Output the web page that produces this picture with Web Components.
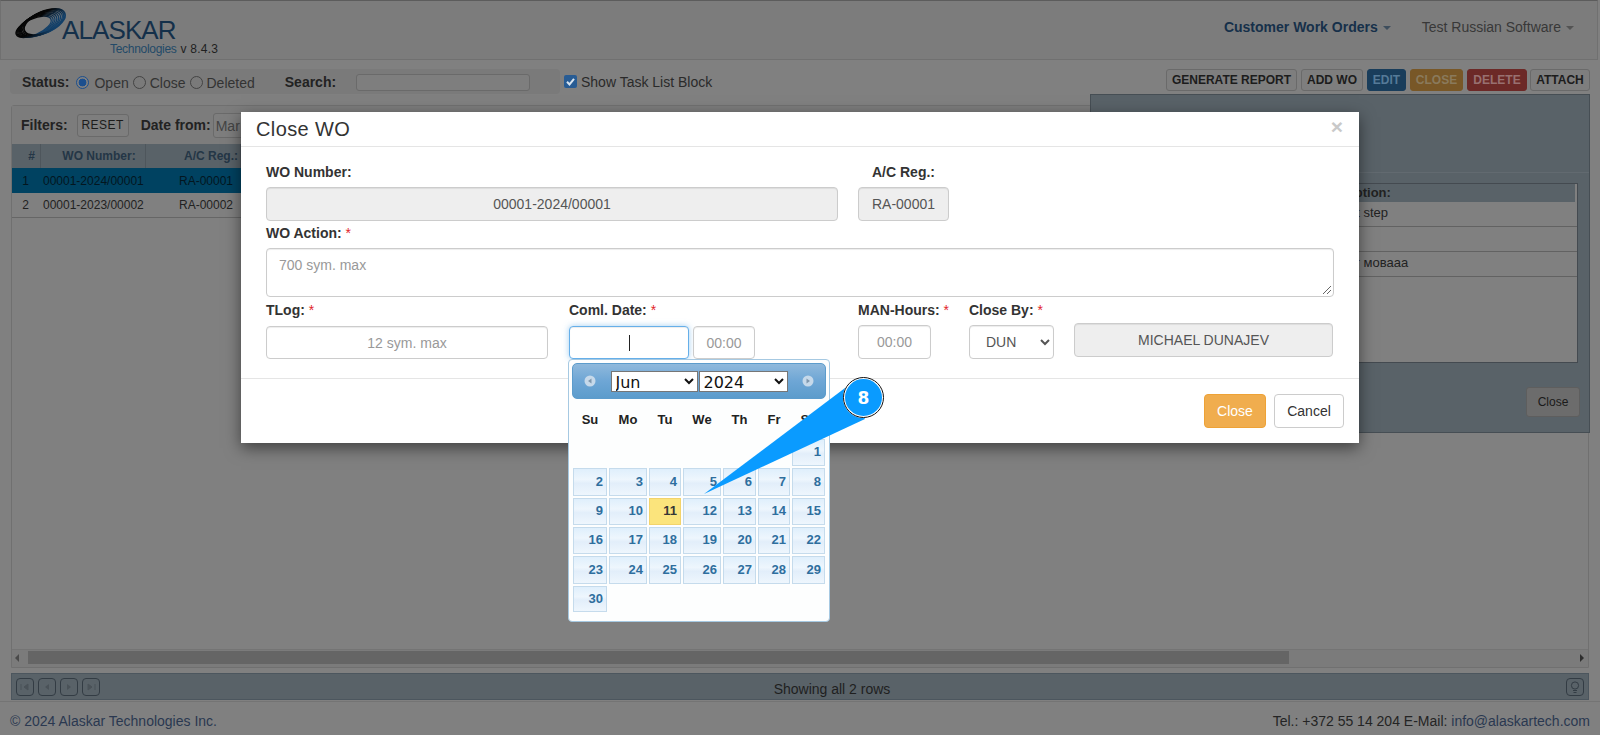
<!DOCTYPE html>
<html lang="en"><head><meta charset="utf-8"><title>Close WO</title>
<style>
html,body{margin:0;height:735px;overflow:hidden;background:#808080;font:14px "Liberation Sans",Arial,sans-serif;color:#1c1c1c}
#page{position:relative;width:1600px;height:735px;overflow:hidden}
</style></head><body>
<div id="page">
  <app-navbar></app-navbar>
  <app-toolbar></app-toolbar>
  <wo-grid></wo-grid>
  <wo-pager></wo-pager>
  <app-footer></app-footer>
  <wo-detail></wo-detail>
  <close-wo-modal></close-wo-modal>
  <date-picker></date-picker>
  <step-callout>8</step-callout>
</div>
<script>
const def=(n,css,html)=>customElements.define(n,class extends HTMLElement{constructor(){super();this.attachShadow({mode:'open'}).innerHTML=`<style>${css}</style>${html}`}});

def('app-navbar',`
:host{display:flex;box-sizing:border-box;height:60px;background:#7c7c7c;border-top:1px solid #5c5c5c;border-bottom:1px solid #707070;border-right:1px solid #707070;border-left:1px solid #707070;margin-right:2px;position:relative}
.logo{width:230px;position:relative;margin-left:11px}
svg{position:absolute;left:0;top:6px}
.a{position:absolute;left:50px;top:19px;font-size:26px;letter-spacing:-.9px;color:#14304a;line-height:21px}
.t{position:absolute;left:98px;top:41px;font-size:12px;line-height:14px;letter-spacing:-.3px;color:#234a68;white-space:nowrap}
.t b{font-weight:400;color:#1f1f1f;letter-spacing:.25px;margin-left:4px}
nav{margin-left:auto;display:flex;align-items:center;padding-bottom:6px}
span{white-space:nowrap}
.m{font-weight:700;color:#16304a}.u{color:#383838;margin-left:31px;margin-right:23px}
i{display:inline-block;width:0;height:0;border:4px solid transparent;border-top-color:currentColor;border-bottom:0;margin-left:5px;vertical-align:2px;opacity:.6}`,
`<div class="logo"><svg width="56" height="34" viewBox="0 0 56 34"><defs><linearGradient id="g" x1="0" y1="0" x2="1" y2="1"><stop offset=".4" stop-color="#050505"/><stop offset=".8" stop-color="#123f68"/></linearGradient></defs>
<g fill="none" stroke="url(#g)" transform="rotate(-24 28 17)" stroke-width="1.3"><ellipse cx="21" cy="17" rx="19" ry="8"/><ellipse cx="22.5" cy="17" rx="19.5" ry="8.5"/><ellipse cx="24" cy="17" rx="20" ry="9"/><ellipse cx="25.5" cy="17" rx="20.5" ry="9.5"/><ellipse cx="27" cy="17" rx="21" ry="10"/><ellipse cx="28.5" cy="17" rx="21.5" ry="10"/><ellipse cx="30" cy="17" rx="22" ry="10.5"/><ellipse cx="31.5" cy="17" rx="22" ry="10.5"/><ellipse cx="33" cy="17" rx="22" ry="10.5" stroke-width="1.8"/></g></svg>
<span class="a">ALASKAR</span><span class="t">Technologies<b>v 8.4.3</b></span></div>
<nav><span class="m">Customer Work Orders<i></i></span><span class="u">Test Russian Software<i></i></span></nav>`);

def('ui-btn',`
:host{display:inline-flex;box-sizing:border-box;height:22px;align-items:center;justify-content:center;font:700 12px "Liberation Sans",Arial,sans-serif;color:#1c1c1c;background:#7e7e7e;border:1px solid #6a6a6a;border-radius:3px;white-space:nowrap}
:host([kind=edit]){background:#193d5b;color:#557a98;border-color:#193d5b}
:host([kind=close]){background:#785727;color:#8a7a5c;border-color:#785727}
:host([kind=del]){background:#6c2927;color:#987070;border-color:#6c2927}`,`<slot></slot>`);

def('app-toolbar',`
:host{display:flex;align-items:flex-start;height:25px;margin-top:9px;margin-left:10px;position:relative}
.st{display:flex;align-items:center;box-sizing:border-box;width:550px;height:25px;background:#7a7a7a;border-radius:4px;padding:1px 0 0 12px;color:#222;white-space:nowrap}
b{font-weight:700;line-height:20px}
.o{margin-top:2px;color:#333}
.r{width:13px;height:13px;border:1px solid #444;border-radius:50%;box-sizing:border-box;flex:none}
.r.on{border-color:#1c4f8e;background:radial-gradient(circle,#1c4f8e 0 3.6px,#808080 4.2px)}
.s{display:block;width:174px;height:17px;box-sizing:border-box;background:#7e7e7e;border:1px solid #6a6a6a;border-radius:3px;margin-left:20px}
.c{display:flex;align-items:center;margin-left:4px;height:25px;color:#2a2a2a;white-space:nowrap}
.cb{width:13px;height:13px;background:#285c94;border-radius:2px;margin-right:4px;display:block}
.bt{margin-left:auto;margin-right:10px;display:flex;height:22px;gap:4px}`,
`<div class="st"><b>Status:</b><span class="r on" style="margin-left:7px"></span><span class="o" style="margin-left:5px">Open</span><span class="r" style="margin-left:4px"></span><span class="o" style="margin-left:4px">Close</span><span class="r" style="margin-left:4px"></span><span class="o" style="margin-left:4px">Deleted</span><b style="margin-left:30px">Search:</b><span class="s"></span></div>
<div class="c"><svg class="cb" viewBox="0 0 13 13"><path d="M3 6.8l2.5 2.6L10 3.8" fill="none" stroke="#d8e4f0" stroke-width="2"/></svg>Show Task List Block</div>
<div class="bt"><ui-btn style="width:131px">GENERATE REPORT</ui-btn><ui-btn style="width:62px">ADD WO</ui-btn><ui-btn kind="edit" style="width:39px">EDIT</ui-btn><ui-btn kind="close" style="width:53px">CLOSE</ui-btn><ui-btn kind="del" style="width:60px">DELETE</ui-btn><ui-btn style="width:60px;margin-left:-1px">ATTACH</ui-btn></div>`);

def('wo-grid',`
:host{display:flex;flex-direction:column;box-sizing:border-box;height:563px;margin:11px 11px 0 11px;border:1px solid #707070;border-radius:3px 3px 0 0;background:#808080;width:1578px}
.f{display:flex;align-items:center;height:38px;background:#7c7c7c;padding-left:9px;color:#222;white-space:nowrap;flex:none}
b{font-weight:700}
.d{box-sizing:border-box;width:110px;height:25px;border:1px solid #6a6a6a;border-radius:3px;margin-left:2px;padding:4px 2px;color:#444;background:#7e7e7e}
.row{display:grid;grid-template-columns:29px 105px 95px 1fr;font-size:12px;color:#222;height:25px;align-items:center;flex:none;border-bottom:1px solid #666;box-sizing:border-box;white-space:nowrap}
.h{height:24px;background:#596268;font-weight:700;color:#243646;border-bottom:0}
.h span{text-align:center;border-right:1px solid #4e565c;height:100%;display:flex;align-items:center;justify-content:center;box-sizing:border-box}
.h span:last-child{border:0}
.sel{background:#004261;color:#03161f;border-bottom:0}
.n{text-align:center;padding-right:2px}.ac{padding-left:33px}.w{padding-left:2px}
.sp{flex:1}
.bar{height:17px;background:#7b7b7b;border-top:1px solid #747474;display:flex;align-items:center;flex:none;position:relative}
.th{position:absolute;left:16px;top:1px;height:13px;width:1261px;background:#656565}
.ar{position:absolute;top:4px;width:0;height:0;border:4px solid transparent}`,
`<div class="f"><b>Filters:</b><ui-btn style="width:52px;height:23px;margin-left:9px;font-weight:400;letter-spacing:.5px">RESET</ui-btn><b style="margin-left:12px">Date from:</b><div class="d">Mar</div></div>
<div class="row h"><span style="padding-left:11px">#</span><span style="padding-left:12px">WO Number:</span><span style="justify-content:flex-end;padding-right:2px">A/C Reg.:</span><span></span></div>
<div class="row sel"><span class="n">1</span><span class="w">00001-2024/00001</span><span class="ac">RA-00001</span><span></span></div>
<div class="row"><span class="n">2</span><span class="w">00001-2023/00002</span><span class="ac">RA-00002</span><span></span></div>
<div class="sp"></div>
<div class="bar"><i class="ar" style="left:3px;border-right-color:#4a4a4a;border-left:0"></i><div class="th"></div><i class="ar" style="right:4px;border-left-color:#2e2e2e;border-right:0"></i></div>`);

def('wo-pager',`
:host{display:flex;align-items:center;box-sizing:border-box;height:27px;width:1578px;margin:5px 11px 0;background:#596268;border:1px solid #4c565e;position:relative;color:#1f1f1f}
.b{box-sizing:border-box;width:18px;height:18px;border:1px solid #333c44;border-radius:4px;margin-left:4px;display:block}
.tx{position:absolute;left:64px;right:0;text-align:center;top:7px}
.l{position:absolute;right:4px;top:4px;margin:0}`,
`<svg class="b" viewBox="0 0 16 16"><path d="M4 5v6M11 5L7 8l4 3z" fill="#4a5258" stroke="#4a5258"/></svg><svg class="b" viewBox="0 0 16 16"><path d="M10 5L6 8l4 3z" fill="#4a5258"/></svg><svg class="b" viewBox="0 0 16 16"><path d="M6 5l4 3-4 3z" fill="#4a5258"/></svg><svg class="b" viewBox="0 0 16 16"><path d="M12 5v6M5 5l4 3-4 3z" fill="#4a5258" stroke="#4a5258"/></svg>
<span class="tx">Showing all 2 rows</span>
<svg class="b l" viewBox="0 0 16 16"><circle cx="8" cy="6.5" r="3.6" fill="none" stroke="#333c44"/><path d="M6 11.5h4M6.5 13.5h3" stroke="#333c44"/></svg>`);

def('app-footer',`
:host{display:flex;justify-content:space-between;box-sizing:border-box;height:35px;border-top:1px solid #747474;margin-top:1px;padding:11px 10px 0;color:#242424;white-space:nowrap}
.l{color:#2a3850}`,`<span class="l">© 2024 Alaskar Technologies Inc.</span><span>Tel.: +372 55 14 204 E-Mail: <span class="l">info@alaskartech.com</span></span>`);

def('wo-detail',`
:host{position:absolute;left:1090px;top:94px;width:500px;height:339px;box-sizing:border-box;background:#596268;border:1px solid #464e54;display:block}
.hr{height:1px;background:#626a70;margin-top:77px}
.tb{box-sizing:border-box;height:180px;margin:10px 11px 0 9px;background:#808080;border:1px solid #444a50;font-size:13px;color:#222}
.hd{height:18px;background:#596268;font-weight:700;padding-left:214px;line-height:18px;margin-right:2px}
.r{height:25px;border-bottom:1px solid #626262;box-sizing:border-box;line-height:22px;white-space:nowrap}
.ft{display:flex;justify-content:flex-end;padding:24px 9px 0 0}
button{all:unset;box-sizing:border-box;width:54px;height:30px;text-align:center;font:12px/28px "Liberation Sans",Arial,sans-serif;background:#6c6c6c;border:1px solid #5e5e5e;border-radius:3px;color:#1a1a1a}`,
`<div class="hr"></div><div class="tb"><div class="hd">Description:</div><div class="r" style="padding-left:235px">Test step</div><div class="r"></div><div class="r" style="padding-left:232px">Тест мовааа</div></div><div class="ft"><button>Close</button></div>`);

def('ui-box',`
:host{display:flex;align-items:center;justify-content:center;box-sizing:border-box;height:34px;border:1px solid #ccc;border-radius:4px;background:#fff;color:#999;font-size:14px;box-shadow:inset 0 1px 1px rgba(0,0,0,.075);white-space:nowrap}
:host([ro]){background:#eee;color:#555}
:host([focus]){border-color:#66afe9;box-shadow:inset 0 1px 1px rgba(0,0,0,.075),0 0 6px rgba(102,175,233,.6)}
:host([area]){justify-content:flex-start;align-items:flex-start;padding:8px 12px;position:relative}`,`<slot></slot>`);

def('ui-label',`
:host{display:block;height:20px;font:700 14px/20px "Liberation Sans",Arial,sans-serif;color:#333;white-space:nowrap}
::slotted(i){font-style:normal;font-weight:400;color:#e2232a}`,`<slot></slot>`);

def('close-wo-modal',`
:host{position:absolute;left:241px;top:112px;width:1118px;height:331px;box-sizing:border-box;background:#fff;box-shadow:0 5px 15px rgba(0,0,0,.5);display:block;color:#333}
header{display:flex;justify-content:space-between;height:34px;border-bottom:1px solid #e5e5e5;padding:0 16px 0 15px;align-items:center}
h4{margin:0;font:400 20px/34px "Liberation Sans",Arial,sans-serif;letter-spacing:.4px;color:#333}
.x{font:700 21px/1 "Liberation Sans",Arial,sans-serif;color:#c9c9c9;margin-top:-6px}
.body{padding:15px 26px 0 25px;height:232px;box-sizing:border-box;border-bottom:1px solid #e5e5e5}
.r1{display:flex;gap:20px;height:59px}
.r3{display:flex;margin-top:3px}
.sp{margin-top:5px}
select{display:block;box-sizing:border-box;width:85px;height:34px;margin-top:5px;padding:0 12px;border:1px solid #ccc;border-radius:4px;background:#fff;color:#555;font:14px "Liberation Sans",Arial,sans-serif;box-shadow:inset 0 1px 1px rgba(0,0,0,.075)}
.caret{width:1px;height:16px;background:#222;display:block}
footer{display:flex;justify-content:flex-end;gap:8px;padding:15px 15px 0 0}
button{box-sizing:border-box;height:34px;padding:0;border:1px solid #ccc;border-radius:4px;background:#fff;color:#333;font:14px "Liberation Sans",Arial,sans-serif}
button.w{background:#f0ad4e;border-color:#eea236;color:#fff}
svg{position:absolute;right:1px;bottom:1px}`,
`<header><h4>Close WO</h4><span class="x">×</span></header>
<div class="body">
<div class="r1"><div style="width:572px"><ui-label>WO Number:</ui-label><ui-box ro class="sp">00001-2024/00001</ui-box></div>
<div style="width:91px"><ui-label style="padding-left:14px">A/C Reg.:</ui-label><ui-box ro class="sp">RA-00001</ui-box></div></div>
<ui-label style="margin-top:2px">WO Action: <i>*</i></ui-label>
<ui-box area style="height:49px;margin-top:5px;width:1068px">700 sym. max<svg width="11" height="11" viewBox="0 0 11 11"><path d="M10 2L2 10M10 6L6 10" stroke="#666" fill="none"/></svg></ui-box>
<div class="r3">
<div style="width:282px"><ui-label>TLog: <i>*</i></ui-label><ui-box style="height:33px;margin-top:6px">12 sym. max</ui-box></div>
<div style="width:186px;margin-left:21px"><ui-label>Coml. Date: <i>*</i></ui-label><div style="display:flex;gap:4px;margin-top:6px"><ui-box focus style="width:120px;height:33px"><span class="caret"></span></ui-box><ui-box style="width:62px;height:33px">00:00</ui-box></div></div>
<div style="width:73px;margin-left:103px"><ui-label>MAN-Hours: <i>*</i></ui-label><ui-box class="sp">00:00</ui-box></div>
<div style="width:85px;margin-left:38px"><ui-label>Close By: <i>*</i></ui-label><select><option>DUN</option></select></div>
<ui-box ro style="width:259px;margin:23px 0 0 20px">MICHAEL DUNAJEV</ui-box>
</div></div>
<footer><button class="w" style="width:62px">Close</button><button style="width:70px">Cancel</button></footer>`);

const cells=[];for(let i=0;i<6;i++)cells.push('<span></span>');
for(let d=1;d<=30;d++)cells.push(`<span class="${d==11?'today':'d'}">${d}</span>`);
def('date-picker',`
:host{position:absolute;left:568px;top:359px;width:262px;height:263px;box-sizing:border-box;background:#fdfefe;border:1px solid #a6c9e2;border-radius:4px;padding:3px;display:block;font-family:"Liberation Sans",Arial,sans-serif}
.hd{display:flex;justify-content:space-between;align-items:center;height:36px;box-sizing:border-box;padding:0 11px;border-radius:5px;border:1px solid #5c9ccc;background:linear-gradient(#8fb9dc,#6ea6d5 50%,#5c9ccc)}
.sel{display:flex;gap:1px}
select{display:block;height:21px;box-sizing:border-box;font:16px "DejaVu Sans",sans-serif;background:#fff;color:#111;border:1px solid #767676;border-radius:0;padding:0}
svg{display:block}
.dn,.g{display:grid;grid-template-columns:34px 38px 32px 38px 33px 32px 33px;column-gap:2px;margin:0 1px}
.dn{height:40px;align-items:center;text-align:center;font-weight:700;font-size:13px;color:#222}
.g{grid-template-rows:27px 28px 27px 27px 28px 26px;row-gap:2px}
.g span{display:flex;align-items:center;justify-content:flex-end;padding:0 3px 2px 0;box-sizing:border-box;font-weight:700;font-size:13px}
.d{border:1px solid #c5dbec;background:linear-gradient(#dfeffc,#eef6fd 40%,#e2eefa 55%,#eef6fd);color:#2e6e9e}
.today{border:1px solid #f2d36b;background:#fbe47c;color:#363636}`,
`<div class="hd"><svg width="12" height="12" viewBox="0 0 12 12"><circle cx="6" cy="6" r="5.5" fill="#c6d9ea"/><path d="M7.5 3.5v5L4 6z" fill="#7f97ad"/></svg><div class="sel"><select style="width:87px"><option>Jun</option></select><select style="width:89px"><option>2024</option></select></div><svg width="12" height="12" viewBox="0 0 12 12"><circle cx="6" cy="6" r="5.5" fill="#c6d9ea"/><path d="M4.5 3.5v5L8 6z" fill="#7f97ad"/></svg></div>
<div class="dn"><span>Su</span><span>Mo</span><span>Tu</span><span>We</span><span>Th</span><span>Fr</span><span>Sa</span></div>
<div class="g">${cells.join('')}</div>`);

def('step-callout',`
:host{position:absolute;left:700px;top:370px;width:190px;height:130px;display:block}
svg{position:absolute;left:0;top:0}
.c{position:absolute;left:143px;top:7px;width:41px;height:41px;box-sizing:border-box;border-radius:50%;background:#0a9bff;border:2px solid #fff;outline:1px solid #111;outline-offset:-1px;display:flex;align-items:center;justify-content:center;color:#fff;font:700 17px "DejaVu Sans",sans-serif}`,
`<svg width="190" height="130" viewBox="0 0 190 130"><polygon points="4,124 145,18 165,49" fill="#0a9bff"/></svg><div class="c"><slot></slot></div>`);
</script>
</body></html>
